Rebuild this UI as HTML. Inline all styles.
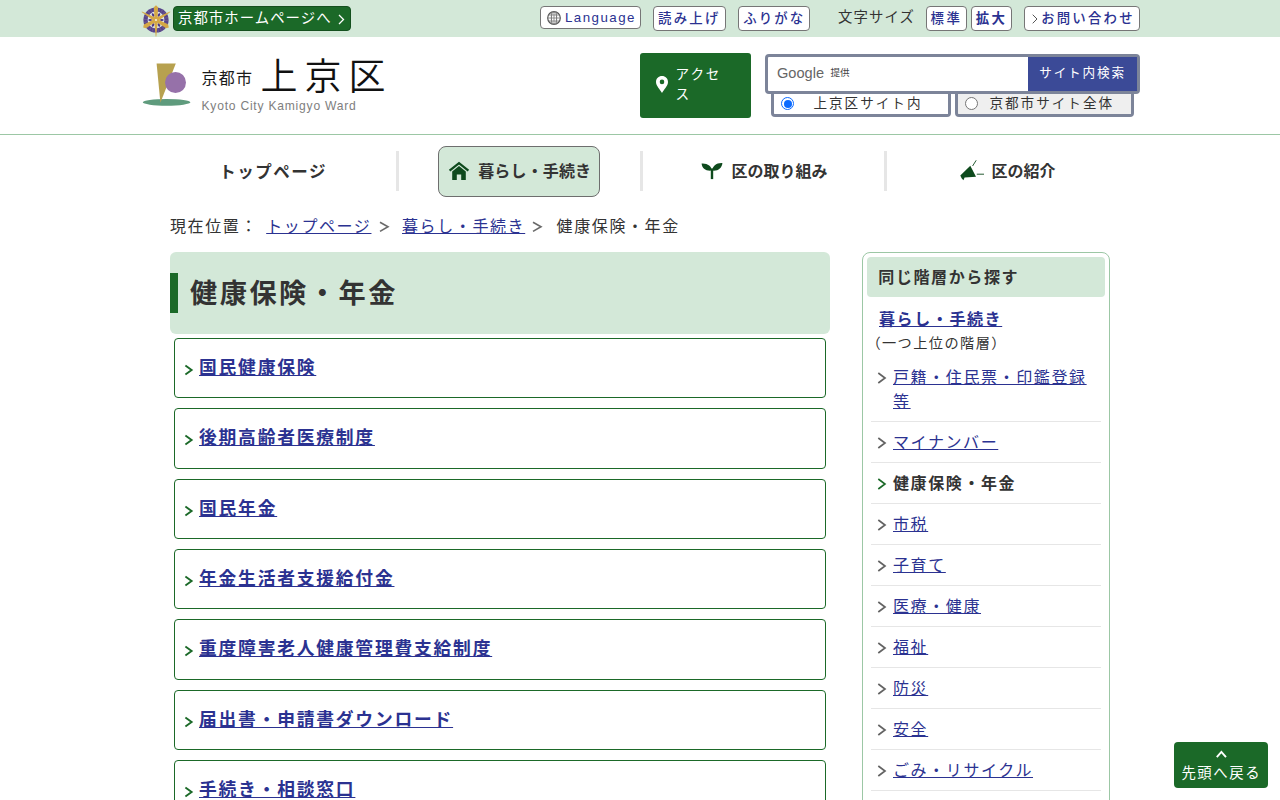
<!DOCTYPE html>
<html lang="ja">
<head>
<meta charset="utf-8">
<title>健康保険・年金</title>
<style>
*{box-sizing:border-box;margin:0;padding:0}
html,body{width:1280px;height:800px;overflow:hidden;background:#fff}
body{font-family:"Liberation Sans","Noto Sans CJK JP",sans-serif;color:#333;font-size:17.6px;letter-spacing:.1em;position:relative}
a{color:#2b3291;text-decoration:underline}
.abs{position:absolute}
/* top bar */
#topbar{position:absolute;left:0;top:0;width:1280px;height:37px;background:#d3e8d8}
.tbtn{position:absolute;top:6px;height:25px;border:1px solid #767676;border-radius:4px;background:#fff;color:#2b3291;font-size:13.4px;line-height:23.6px;text-align:left;white-space:nowrap;letter-spacing:2.1px;padding-left:4.3px;font-weight:500}
#kyoto{position:absolute;left:173px;top:6px;width:178px;height:25px;border-radius:4px;background:#1b6928;border:1px solid #14501e;color:#fff;font-size:14.4px;line-height:23px;padding-left:4px;white-space:nowrap;letter-spacing:1.04px}
/* header */
#hline{position:absolute;left:0;top:134px;width:1280px;height:1px;background:#9cc7a5}
#access{position:absolute;left:640px;top:53px;width:111px;height:65px;background:#1b6928;border-radius:3px;color:#fff;font-size:13.6px;line-height:20px;letter-spacing:1.87px}
#search{position:absolute;left:765px;top:54px;width:375px;height:40px;border:3px solid #7c8499;border-radius:4px;background:#fff}
#sbtn{position:absolute;left:260px;top:0;width:109px;height:34px;background:#3b4a97;color:#fff;font-size:12.6px;line-height:33.4px;padding-left:11.2px;white-space:nowrap;letter-spacing:1.85px}
.radio{position:absolute;top:91px;height:26px;border:3px solid #7c8499;border-top:0;border-radius:0 0 4px 4px;font-size:13.6px;line-height:20px;color:#333;white-space:nowrap;letter-spacing:2px}
.r1{left:7px;top:6px;width:13px;height:13px;border-radius:50%;border:1px solid #0b6bff;background:#fff}
.r1:after{content:"";position:absolute;left:1.5px;top:1.5px;width:8px;height:8px;border-radius:50%;background:#0b6bff}
.r2{left:7px;top:6px;width:13px;height:13px;border-radius:50%;border:1px solid #767676;background:#fff}
/* nav */
.nav{position:absolute;top:160px;font-weight:bold;font-size:16px;line-height:24px;color:#333;white-space:nowrap;letter-spacing:0}
.sep{position:absolute;top:151px;width:3px;height:40px;background:#e6e6e6}
/* breadcrumb */
.bc{position:absolute;top:214px;font-size:16px;line-height:26px;white-space:nowrap;letter-spacing:1.6px}
/* main */
#h1{position:absolute;left:170px;top:252px;width:660px;height:82px;background:#d3e8d8;border-radius:6px}
#h1 .bar{position:absolute;left:0;top:21px;width:8px;height:40px;background:#1b6928}
#h1 .t{position:absolute;left:20px;top:21px;font-size:27.2px;line-height:42px;font-weight:bold;color:#333;letter-spacing:2.5px;white-space:nowrap}
.item{position:absolute;left:174px;width:652px;height:60.4px;border:1px solid #1b6928;border-radius:4px;background:#fff}
.item a{position:absolute;left:24px;top:16px;font-size:17.78px;line-height:26px;font-weight:bold;white-space:nowrap;letter-spacing:1.78px}
.item .ch{position:absolute;left:9px;top:25px}
/* sidebar */
#side{position:absolute;left:862px;top:252px;width:248px;height:600px;border:1px solid #9cc7a5;border-radius:8px;background:#fff}
#side .hd{position:absolute;left:4px;top:4px;width:238px;height:39.6px;background:#d3e8d8;border-radius:4px;font-weight:bold;font-size:16px;line-height:41.6px;padding-left:11.3px;color:#333;letter-spacing:1.6px;white-space:nowrap}
.sl{position:absolute;left:30px;font-size:16px;line-height:24px;letter-spacing:1.6px;white-space:nowrap}
.sline{position:absolute;left:8px;width:230px;height:1px;background:#e6e6e6}
.sch{position:absolute;left:14px}
/* back to top */
#totop{position:absolute;left:1174px;top:742px;width:94px;height:46px;background:#1b6928;border-radius:4px;color:#fff;font-size:14.4px;letter-spacing:1.55px}
</style>
</head>
<body>
<div id="topbar">
  <svg class="abs" style="left:138.4px;top:1.6px" width="36" height="36" viewBox="-18 -18 36 36"><circle r="12.6" fill="#54408c"/><circle r="10.4" fill="none" stroke="#7a6a8c" stroke-width="3.6" stroke-dasharray="1.2 1.5" opacity=".55"/><circle r="8.4" fill="#dde6e4"/><g fill="#4a3486"><ellipse cx="5.8" cy="0" rx="1.9" ry="1.1"/><ellipse cx="5.8" cy="0" rx="1.9" ry="1.1" transform="rotate(60)"/><ellipse cx="5.8" cy="0" rx="1.9" ry="1.1" transform="rotate(120)"/><ellipse cx="5.8" cy="0" rx="1.9" ry="1.1" transform="rotate(180)"/><ellipse cx="5.8" cy="0" rx="1.9" ry="1.1" transform="rotate(240)"/><ellipse cx="5.8" cy="0" rx="1.9" ry="1.1" transform="rotate(300)"/></g><g fill="#d4a846"><path id="w" d="M-1.5 0 L-2.1 -12.8 L0 -14.8 L2.1 -12.8 L1.5 0 Z"/><use href="#w" transform="rotate(120)"/><use href="#w" transform="rotate(240)"/><path id="p" d="M-1.9 0 L-.3 16.4 L.3 16.4 L1.9 0 Z"/><use href="#p" transform="rotate(120)"/><use href="#p" transform="rotate(240)"/><circle r="2.9"/></g><circle r="1.1" fill="#f4f0dc"/></svg>
  <div id="kyoto">京都市ホームページへ<svg class="abs" style="left:164px;top:6.5px" width="7" height="11" viewBox="0 0 7 11"><path d="M1 1 L5.5 5.5 L1 10" fill="none" stroke="#fff" stroke-width="1.3"/></svg></div>
  <div class="tbtn" style="left:540px;width:101px;height:23px;line-height:21px;font-size:13.33px;letter-spacing:1.45px;padding-left:24px">Language<svg class="abs" style="left:6px;top:3.5px" width="14" height="14" viewBox="0 0 14 14"><circle cx="7" cy="7" r="6.3" fill="#fff" stroke="#555" stroke-width="1.2"/><g stroke="#777" stroke-width=".8" fill="none"><ellipse cx="7" cy="7" rx="2.6" ry="6.3"/><line x1="7" y1=".7" x2="7" y2="13.3"/><line x1=".7" y1="7" x2="13.3" y2="7"/><line x1="1.5" y1="4" x2="12.5" y2="4"/><line x1="1.5" y1="10" x2="12.5" y2="10"/><line x1="4.4" y1="1.2" x2="4.4" y2="12.8"/><line x1="9.6" y1="1.2" x2="9.6" y2="12.8"/></g></svg></div>
  <div class="tbtn" style="left:653px;width:73px;padding-left:4px;letter-spacing:2.25px">読み上げ</div>
  <div class="tbtn" style="left:738px;width:72px">ふりがな</div>
  <div class="abs" style="left:838px;top:7px;font-size:14.4px;line-height:21px;color:#333;white-space:nowrap;letter-spacing:1.1px">文字サイズ</div>
  <div class="tbtn" style="left:926px;width:41px;letter-spacing:2.6px;padding-left:3.6px">標準</div>
  <div class="tbtn" style="left:971px;width:41px;font-weight:bold;letter-spacing:2.3px;padding-left:3.8px">拡大</div>
  <div class="tbtn" style="left:1024px;width:116px;padding-left:16.2px;letter-spacing:2.2px">お問い合わせ<svg class="abs" style="left:7px;top:7px" width="6" height="10" viewBox="0 0 6 10"><path d="M.7 .7 L5 5 L.7 9.3" fill="none" stroke="#555" stroke-width="1"/></svg></div>
</div>

<div id="logo">
  <svg class="abs" style="left:136px;top:50px" width="70" height="70" viewBox="136 50 70 70"><ellipse cx="166.6" cy="102.3" rx="23.8" ry="3.4" fill="#5f9b7d"/><path d="M156.6 63.4 L175.8 63.4 L160.4 102.8 Z" fill="#b7a14f"/><circle cx="175.5" cy="82.5" r="10.5" fill="#9671a9"/></svg>
  <div class="abs" id="lg1" style="left:201.5px;top:67px;font-size:16px;line-height:24px;color:#1a1a1a;letter-spacing:1.3px;white-space:nowrap">京都市</div>
  <div class="abs" id="lg2" style="left:260.5px;top:50px;font-size:37px;line-height:56px;font-weight:350;color:#111;letter-spacing:7px;white-space:nowrap">上京区</div>
  <div class="abs" id="lg3" style="left:201.5px;top:98px;font-size:12.1px;line-height:16px;color:#7e7e7e;letter-spacing:.77px;white-space:nowrap">Kyoto City Kamigyo Ward</div>
</div>
<div id="access"><svg class="abs" style="left:15px;top:22px" width="14" height="19" viewBox="0 0 14 19"><path d="M7 1 C3.6 1 1 3.6 1 6.9 C1 10.8 5.2 14.6 7 18 C8.8 14.6 13 10.8 13 6.9 C13 3.6 10.4 1 7 1 Z M7 4.6 A2.3 2.3 0 1 1 7 9.2 A2.3 2.3 0 1 1 7 4.6 Z" fill="#fff" fill-rule="evenodd"/></svg><span class="abs" style="left:35.6px;top:12px;width:60px">アクセス</span></div>
<div class="radio" style="left:771px;width:180px"><span class="abs r1"></span><span class="abs" style="left:39.4px;top:2.5px">上京区サイト内</span></div>
<div class="radio" style="left:955px;width:179px;background:#efefef"><span class="abs r2"></span><span class="abs" style="left:31.4px;top:2.5px">京都市サイト全体</span></div>
<div id="search"><span class="abs" id="goog" style="left:9px;top:5px;font-size:14.6px;line-height:22px;color:#666;letter-spacing:0">Google</span><span class="abs" style="left:62.5px;top:9px;font-size:9.6px;line-height:14px;color:#444;letter-spacing:0;white-space:nowrap">提供</span><div id="sbtn">サイト内検索</div></div>
<div id="hline"></div>

<div class="nav" style="left:219.3px;font-size:16.5px;letter-spacing:1.5px">トップページ</div>
<div class="sep" style="left:396px"></div>
<div class="abs" style="left:438px;top:146px;width:162px;height:51px;background:#d3e8d8;border:1px solid #6e6e6e;border-radius:8px"></div>
<svg class="abs" style="left:448px;top:161px" width="22" height="20" viewBox="0 0 22 20"><path d="M1.6 9.6 L11 2.2 L20.4 9.6" fill="none" stroke="#0e4a1d" stroke-width="2.3" stroke-linejoin="miter"/><path d="M4.2 10.4 L11 5.1 L17.8 10.4 L17.8 19 L13.2 19 L13.2 13.6 L8.8 13.6 L8.8 19 L4.2 19 Z" fill="#0e4a1d"/></svg>
<div class="nav" style="left:478.2px;letter-spacing:.15px">暮らし・手続き</div>
<div class="sep" style="left:640px"></div>
<svg class="abs" style="left:701px;top:162px" width="22" height="18" viewBox="0 0 22 18"><path d="M10.9 8.6 C10.6 4.2 6.6 1.2 .6 1.6 C1 6.6 5 9.4 10.9 8.6 Z M11.1 8.6 C11.4 4.2 15.4 .6 21.4 1 C21 6 17 9.4 11.1 8.6 Z" fill="#0e4a1d"/><rect x="9.8" y="6.5" width="2.4" height="10.6" fill="#0e4a1d"/></svg>
<div class="nav" style="left:731.5px">区の取り組み</div>
<div class="sep" style="left:884px"></div>
<svg class="abs" style="left:958px;top:158px" width="28" height="24" viewBox="958 158 28 24"><path d="M960.3 175.6 L970.3 165.8 L976 176.8 L964.6 177.6 L963.4 180.2 L961.6 178.2 Z" fill="#0e4a1d"/><path d="M972.6 166 L976.2 160.3 M976.8 174.2 L984 174.2" stroke="#0e4a1d" stroke-width=".9" fill="none"/></svg>
<div class="nav" style="left:991.5px">区の紹介</div>

<div class="bc" style="left:170px">現在位置：</div>
<a class="bc" href="#" style="left:266.2px">トップページ</a>
<svg class="abs" style="left:379.4px;top:220.6px" width="11" height="12" viewBox="0 0 11 12"><path d="M1 1.2 L9 5.8 L1 10.4" fill="none" stroke="#6a6a6a" stroke-width="1.6"/></svg>
<a class="bc" href="#" style="left:402px">暮らし・手続き</a>
<svg class="abs" style="left:531.6px;top:220.6px" width="11" height="12" viewBox="0 0 11 12"><path d="M1 1.2 L9 5.8 L1 10.4" fill="none" stroke="#6a6a6a" stroke-width="1.6"/></svg>
<div class="bc" style="left:556.6px">健康保険・年金</div>

<div id="h1"><div class="bar"></div><div class="t">健康保険・年金</div></div>
<div class="item" style="top:337.8px"><svg class="abs" style="left:9.2px;top:25.1px" width="10" height="12" viewBox="0 0 10 12"><path d="M1.4 1.6 L7.6 6 L1.4 10.4" fill="none" stroke="#1b6928" stroke-width="1.9"/></svg><a href="#">国民健康保険</a></div>
<div class="item" style="top:408.2px"><svg class="abs" style="left:9.2px;top:25.1px" width="10" height="12" viewBox="0 0 10 12"><path d="M1.4 1.6 L7.6 6 L1.4 10.4" fill="none" stroke="#1b6928" stroke-width="1.9"/></svg><a href="#">後期高齢者医療制度</a></div>
<div class="item" style="top:478.6px"><svg class="abs" style="left:9.2px;top:25.1px" width="10" height="12" viewBox="0 0 10 12"><path d="M1.4 1.6 L7.6 6 L1.4 10.4" fill="none" stroke="#1b6928" stroke-width="1.9"/></svg><a href="#">国民年金</a></div>
<div class="item" style="top:549.0px"><svg class="abs" style="left:9.2px;top:25.1px" width="10" height="12" viewBox="0 0 10 12"><path d="M1.4 1.6 L7.6 6 L1.4 10.4" fill="none" stroke="#1b6928" stroke-width="1.9"/></svg><a href="#">年金生活者支援給付金</a></div>
<div class="item" style="top:619.4px"><svg class="abs" style="left:9.2px;top:25.1px" width="10" height="12" viewBox="0 0 10 12"><path d="M1.4 1.6 L7.6 6 L1.4 10.4" fill="none" stroke="#1b6928" stroke-width="1.9"/></svg><a href="#">重度障害老人健康管理費支給制度</a></div>
<div class="item" style="top:689.8px"><svg class="abs" style="left:9.2px;top:25.1px" width="10" height="12" viewBox="0 0 10 12"><path d="M1.4 1.6 L7.6 6 L1.4 10.4" fill="none" stroke="#1b6928" stroke-width="1.9"/></svg><a href="#">届出書・申請書ダウンロード</a></div>
<div class="item" style="top:760.2px"><svg class="abs" style="left:9.2px;top:25.1px" width="10" height="12" viewBox="0 0 10 12"><path d="M1.4 1.6 L7.6 6 L1.4 10.4" fill="none" stroke="#1b6928" stroke-width="1.9"/></svg><a href="#">手続き・相談窓口</a></div>

<div id="side">
  <div class="hd">同じ階層から探す</div>
  <a class="sl" href="#" style="left:16px;top:54.5px;font-weight:bold">暮らし・手続き</a>
  <div class="sl" style="left:3.4px;top:77.6px;font-size:14.2px;letter-spacing:1.42px;color:#333">（一つ上位の階層）</div>
  <svg class="abs" style="left:13.5px;top:118.6px" width="10" height="12" viewBox="0 0 10 12"><path d="M1.3 1 L8 6 L1.3 11" fill="none" stroke="#636363" stroke-width="1.7"/></svg>
  <a class="sl" href="#" style="top:112.7px;white-space:normal;width:206px">戸籍・住民票・印鑑登録等</a>
  <div class="sline" style="top:168px"></div>
  <svg class="abs" style="left:13.5px;top:183.6px" width="10" height="12" viewBox="0 0 10 12"><path d="M1.3 1 L8 6 L1.3 11" fill="none" stroke="#636363" stroke-width="1.7"/></svg>
  <a class="sl" href="#" style="top:177.7px">マイナンバー</a>
  <div class="sline" style="top:209px"></div>
  <svg class="abs" style="left:13.5px;top:224.6px" width="10" height="12" viewBox="0 0 10 12"><path d="M1.3 1 L8 6 L1.3 11" fill="none" stroke="#1b6928" stroke-width="1.6"/></svg>
  <div class="sl" style="top:218.7px;font-weight:bold;color:#333">健康保険・年金</div>
  <div class="sline" style="top:250px"></div>
  <svg class="abs" style="left:13.5px;top:265.6px" width="10" height="12" viewBox="0 0 10 12"><path d="M1.3 1 L8 6 L1.3 11" fill="none" stroke="#636363" stroke-width="1.7"/></svg>
  <a class="sl" href="#" style="top:259.7px">市税</a>
  <div class="sline" style="top:291px"></div>
  <svg class="abs" style="left:13.5px;top:306.6px" width="10" height="12" viewBox="0 0 10 12"><path d="M1.3 1 L8 6 L1.3 11" fill="none" stroke="#636363" stroke-width="1.7"/></svg>
  <a class="sl" href="#" style="top:300.7px">子育て</a>
  <div class="sline" style="top:332px"></div>
  <svg class="abs" style="left:13.5px;top:347.6px" width="10" height="12" viewBox="0 0 10 12"><path d="M1.3 1 L8 6 L1.3 11" fill="none" stroke="#636363" stroke-width="1.7"/></svg>
  <a class="sl" href="#" style="top:341.7px">医療・健康</a>
  <div class="sline" style="top:373px"></div>
  <svg class="abs" style="left:13.5px;top:388.6px" width="10" height="12" viewBox="0 0 10 12"><path d="M1.3 1 L8 6 L1.3 11" fill="none" stroke="#636363" stroke-width="1.7"/></svg>
  <a class="sl" href="#" style="top:382.7px">福祉</a>
  <div class="sline" style="top:414px"></div>
  <svg class="abs" style="left:13.5px;top:429.6px" width="10" height="12" viewBox="0 0 10 12"><path d="M1.3 1 L8 6 L1.3 11" fill="none" stroke="#636363" stroke-width="1.7"/></svg>
  <a class="sl" href="#" style="top:423.7px">防災</a>
  <div class="sline" style="top:455px"></div>
  <svg class="abs" style="left:13.5px;top:470.6px" width="10" height="12" viewBox="0 0 10 12"><path d="M1.3 1 L8 6 L1.3 11" fill="none" stroke="#636363" stroke-width="1.7"/></svg>
  <a class="sl" href="#" style="top:464.7px">安全</a>
  <div class="sline" style="top:496px"></div>
  <svg class="abs" style="left:13.5px;top:511.6px" width="10" height="12" viewBox="0 0 10 12"><path d="M1.3 1 L8 6 L1.3 11" fill="none" stroke="#636363" stroke-width="1.7"/></svg>
  <a class="sl" href="#" style="top:505.7px">ごみ・リサイクル</a>
  <div class="sline" style="top:537px"></div>
</div>

<div id="totop"><svg class="abs" style="left:40.5px;top:7px" width="13" height="10" viewBox="0 0 13 10"><path d="M1.8 8.2 L6.4 2.9 L11 8.2" fill="none" stroke="#fff" stroke-width="1.9"/></svg><span class="abs" style="left:7.4px;top:20px;line-height:22px;white-space:nowrap">先頭へ戻る</span></div>
</body>
</html>
